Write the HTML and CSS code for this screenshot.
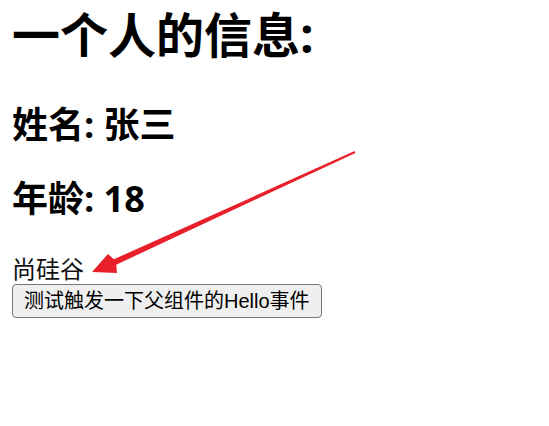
FILE: index.html
```html
<!DOCTYPE html>
<html lang="zh-CN">
<head>
<meta charset="utf-8">
<title>School</title>
<link rel="stylesheet" href="styles.css">
</head>
<body>
<div class="app">
  <h1 class="title">一个人的信息:</h1>
  <h2 class="row row-name">姓名: 张三</h2>
  <h2 class="row row-age">年龄: 18</h2>
  <div class="school">尚硅谷</div>
  <button class="btn" type="button">测试触发一下父组件的Hello事件</button>
</div>
<svg class="annotation" width="549" height="426" viewBox="0 0 549 426" xmlns="http://www.w3.org/2000/svg">
  <polygon fill="#e8202a" points="354.6,151.1 113.8,259.3 108,254 92,272 117,273 116.2,264.7 355.4,152.9"/>
</svg>
</body>
</html>
```

FILE: styles.css
```css
html, body {
  margin: 0;
  padding: 0;
  background: #ffffff;
}

body {
  position: relative;
  width: 549px;
  height: 426px;
  overflow: hidden;
  font-family: "Liberation Sans", "Noto Sans CJK SC", sans-serif;
  color: #000;
}

.app {
  padding: 2px 12px 0;
  display: flex;
  flex-direction: column;
  align-items: flex-start;
}

.title {
  margin: 0;
  font-family: "Open Sans", "Noto Sans CJK SC", sans-serif;
  font-size: 48px;
  font-weight: 700;
  line-height: 66px;
}

.row {
  margin: 0;
  font-family: "Open Sans", "Noto Sans CJK SC", sans-serif;
  font-size: 36px;
  font-weight: 700;
  line-height: 50px;
}

.row-name {
  margin-top: 32px;
}

.row-age {
  margin-top: 24px;
}

.school {
  margin-top: 28px;
  font-family: "Noto Sans CJK SC", sans-serif;
  font-size: 24px;
  line-height: 32px;
  color: #111;
}

.btn {
  margin: 0;
  font-family: "Liberation Sans", "Noto Sans CJK SC", sans-serif;
  font-size: 20px;
  line-height: 28px;
  padding: 2px 11px;
  border: 1px solid #767676;
  border-radius: 4px;
  background: #efefef;
  color: #000;
}

.annotation {
  position: absolute;
  left: 0;
  top: 0;
  pointer-events: none;
}
```
